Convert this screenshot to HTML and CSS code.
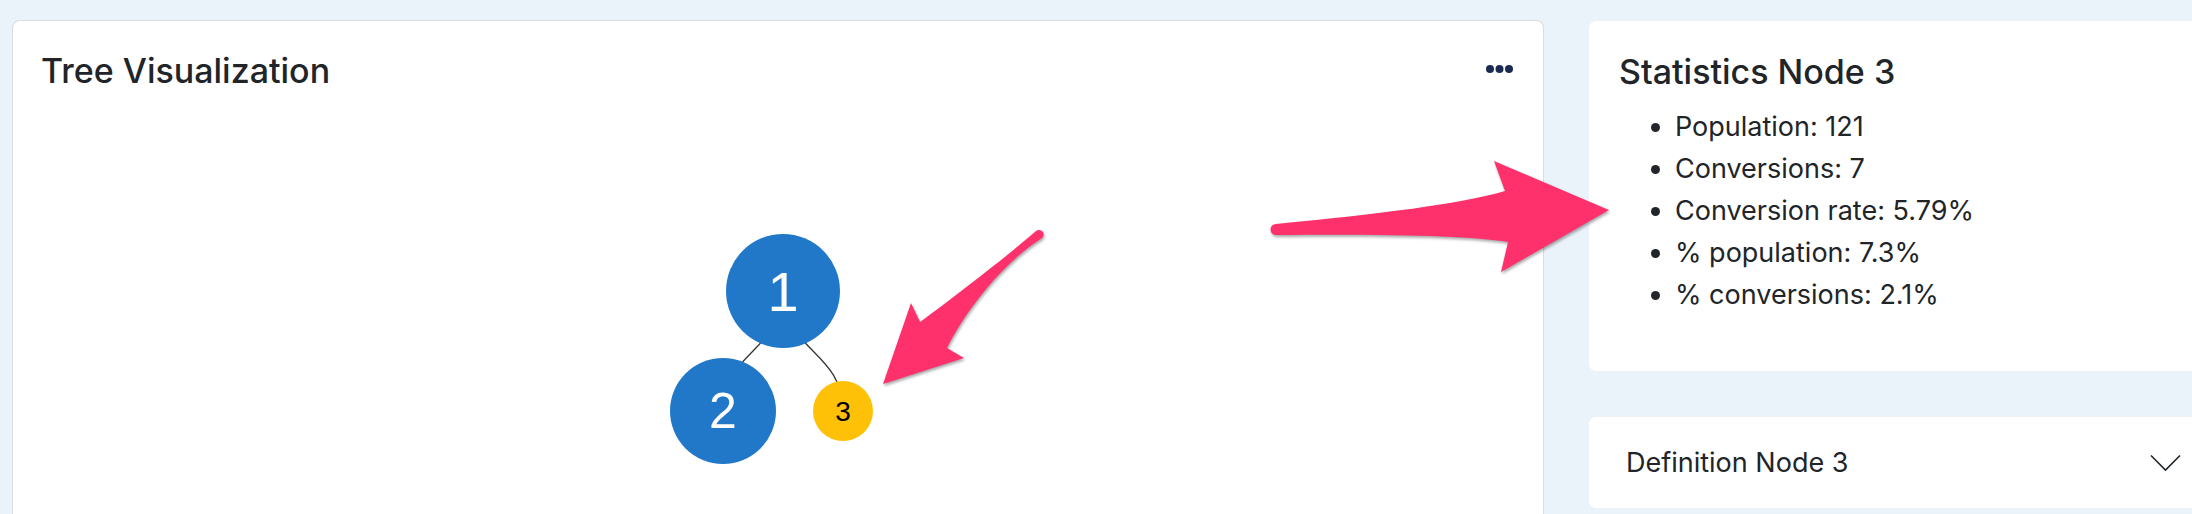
FILE: index.html
```html
<!DOCTYPE html>
<html lang="en">
<head>
<meta charset="utf-8">
<title>Tree Visualization</title>
<link rel="stylesheet" href="styles.css">
</head>
<body>
<div class="page">
  <section class="card tree-card">
    <header class="card-header">
      <h2 class="card-title">Tree Visualization</h2>
      <button class="more-btn" aria-label="More options">
        <svg width="30" height="10" viewBox="0 0 30 10"><circle cx="5" cy="5" r="4"/><circle cx="14.5" cy="5" r="4"/><circle cx="24" cy="5" r="4"/></svg>
      </button>
    </header>
    <svg class="tree" viewBox="0 0 1530 414" width="1530" height="414">
      <path class="link" d="M770 191 C770 251 710 251 710 311"/>
      <path class="link" d="M770 191 C770 251 830 251 830 311"/>
      <circle class="node-blue" cx="770" cy="191" r="57"/>
      <text class="label-white big" x="770" y="191">1</text>
      <circle class="node-blue" cx="710" cy="311" r="53"/>
      <text class="label-white mid" x="710" y="311">2</text>
      <circle class="node-yellow" cx="830" cy="311" r="30"/>
      <text class="label-dark" x="830" y="311">3</text>
    </svg>
  </section>
  <aside class="side">
    <section class="card stats-card">
      <h2 class="card-title">Statistics Node 3</h2>
      <ul class="stats-list">
        <li>Population: 121</li>
        <li>Conversions: 7</li>
        <li>Conversion rate: 5.79%</li>
        <li>% population: 7.3%</li>
        <li>% conversions: 2.1%</li>
      </ul>
    </section>
    <section class="card def-card">
      <span class="def-title">Definition Node 3</span>
      <svg class="chevron" width="32" height="18" viewBox="0 0 32 18"><polyline points="1,1.5 15.5,16 30,1.5"/></svg>
    </section>
  </aside>
</div>
<svg class="annotations" width="2192" height="514" viewBox="0 0 2192 514">
  <path class="arrow" d="M1276 224 C1380 214 1460 204 1505 191 L1494 161 L1609 210 L1501 272 L1508 242 C1470 236 1400 234 1276 235 A5.5 5.5 0 0 1 1276 224 Z"/>
  <path class="arrow" d="M1036 231 C1000 262 950 300 920 322 L911 303 L883 384 L964 358 L947 348 C965 312 1000 265 1042 238 A4.5 4.5 0 0 0 1036 231 Z"/>
</svg>
</body>
</html>
```
FILE: styles.css
```css
html, body {
  margin: 0;
  padding: 0;
}
body {
  width: 2192px;
  height: 514px;
  overflow: hidden;
  background: #eaf2fa;
  font-family: Inter, "Noto Sans", "Liberation Sans", sans-serif;
  color: #212529;
  position: relative;
}
.page {
  display: flex;
  gap: 44px;
  padding: 20px 0 0 12px;
  width: 2192px;
  height: 514px;
  box-sizing: border-box;
}
.card {
  background: #fff;
  border-radius: 8px;
  box-sizing: border-box;
}
.tree-card {
  width: 1532px;
  height: 494px;
  flex: none;
  border: 1px solid #dadcdf;
  border-bottom: 0;
  border-radius: 8px 8px 0 0;
  overflow: hidden;
}
.card-header {
  height: 79px;
  box-sizing: border-box;
  padding: 30px 28px 0 28px;
  display: flex;
  justify-content: space-between;
  align-items: flex-start;
}
.card-title {
  margin: 0;
  font-size: 34px;
  line-height: 40px;
  font-weight: 500;
}
.more-btn {
  border: 0;
  background: none;
  padding: 0;
  margin-top: 13px;
  width: 30px;
  height: 10px;
  display: block;
}
.more-btn svg {
  display: block;
  fill: #1b2a52;
}
.tree {
  display: block;
}
.link {
  fill: none;
  stroke: #333;
  stroke-width: 1.3;
}
.node-blue { fill: #2178c9; }
.node-yellow { fill: #ffc107; }
.tree text {
  font-family: "Liberation Sans", Arial, sans-serif;
  text-anchor: middle;
  dominant-baseline: central;
}
.label-white { fill: #fff; }
.big { font-size: 56px; }
.mid { font-size: 50px; }
.label-dark { fill: #000; font-size: 28px; }
.side {
  width: 604px;
  flex: none;
  display: flex;
  flex-direction: column;
  gap: 44px;
}
.stats-card {
  height: 352px;
  padding: 31px 30px 0 30px;
  border: 1px solid #eef2f6;
  border-right: 0;
  border-radius: 8px 0 0 8px;
}
.stats-list {
  margin: 14px 0 0 0;
  padding-left: 56px;
  font-size: 27px;
  line-height: 42px;
}
.def-card {
  height: 93px;
  padding: 0 10px 0 37px;
  display: flex;
  align-items: center;
  justify-content: space-between;
  border: 1px solid #eef2f6;
  border-right: 0;
  border-radius: 8px 0 0 8px;
}
.def-title {
  font-size: 27px;
  line-height: 36px;
}
.chevron {
  display: block;
}
.chevron polyline {
  fill: none;
  stroke: #212529;
  stroke-width: 1.6;
}
.annotations {
  position: absolute;
  left: 0;
  top: 0;
  pointer-events: none;
}
.arrow {
  fill: #ff316c;
  filter: drop-shadow(1px 2px 1.5px rgba(0, 0, 0, 0.35));
}
```
